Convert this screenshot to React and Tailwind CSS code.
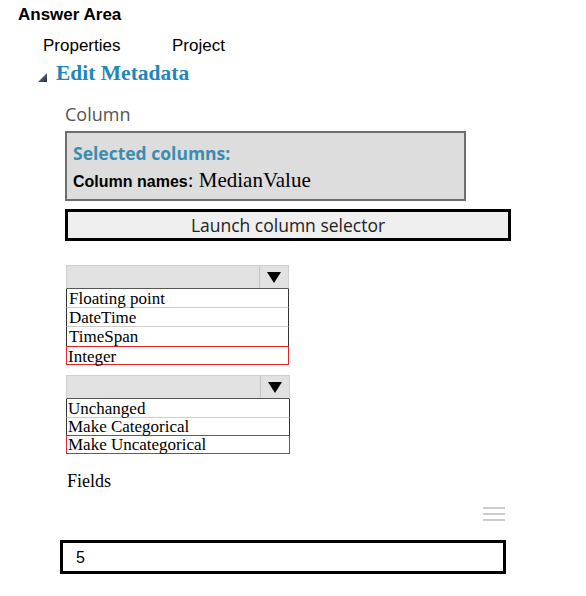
export default function App() {
  const serif = "font-['Liberation_Serif','Times_New_Roman',serif]";
  const sans = "font-['Liberation_Sans',Arial,sans-serif]";
  const segoe = "font-['Open_Sans','Noto_Sans',sans-serif]";
  return (
    <div className="w-[586px] h-[596px] bg-white overflow-hidden text-black">
      <div className={`pt-[5px] pl-[18px] text-[17px] leading-[20px] font-bold ${sans}`}>Answer Area</div>
      <div className={`mt-[11px] flex h-[20px] text-[17px] leading-[20px] ${sans}`}>
        <span className="ml-[43px] w-[129px]">Properties</span>
        <span>Project</span>
      </div>
      <div className="mt-[5px] flex items-start h-[24px]">
        <svg className="ml-[38px] mt-[12px]" width="9" height="9" viewBox="0 0 9 9">
          <defs>
            <linearGradient id="tg" x1="0" y1="0" x2="1" y2="1">
              <stop offset="0" stopColor="#7b8794" />
              <stop offset="1" stopColor="#1f2d3d" />
            </linearGradient>
          </defs>
          <polygon points="9,0 9,9 0,9" fill="url(#tg)" />
        </svg>
        <span className={`ml-[9px] text-[21.5px] leading-[24px] font-bold text-[#2386b6] ${serif}`}>Edit Metadata</span>
      </div>
      <div className={`mt-[17px] ml-[65px] text-[18px] leading-[24px] text-[#555555] ${segoe}`}>Column</div>
      <div className="mt-[5px] ml-[65px] w-[401px] h-[70px] border-2 border-[#6e6e6e] bg-[#dddddd] pl-[6px]">
        <div className={`pt-[9px] text-[17.5px] leading-[22px] font-bold text-[#3b8db0] ${segoe}`}>Selected columns:</div>
        <div className={`mt-[4px] text-[16px] leading-[24px] whitespace-nowrap ${sans}`}>
          <span className="font-bold">Column names</span>
          <span className={`text-[21px] ${serif}`}>: MedianValue</span>
        </div>
      </div>
      <div className={`mt-[8px] ml-[65px] w-[446px] h-[32px] border-[3px] border-black bg-[#efefef] flex items-center justify-center text-[17.5px] text-[#222222] ${segoe}`}>
        Launch column selector
      </div>

      <div className={`mt-[24px] ml-[66px] w-[223px] text-[17px] leading-[19px] ${serif}`}>
        <div className="h-[24px] flex bg-[#e1e1e1] border-x border-t border-[#cfcfcf] border-b border-b-[#555555]">
          <div className="flex-1" />
          <div className="w-[29px] border-l border-[#c4c4c4] flex items-center justify-center">
            <svg width="14" height="11" viewBox="0 0 14 11"><polygon points="0,0 14,0 7,11" fill="#000" /></svg>
          </div>
        </div>
        <div className="h-[19px] border-x border-[#333333] border-b border-b-[#cccccc] pl-[2px]">Floating point</div>
        <div className="h-[19px] border-x border-[#333333] border-b border-b-[#cccccc] pl-[2px]">DateTime</div>
        <div className="h-[19px] border-x border-[#333333] pl-[2px]">TimeSpan</div>
        <div className="h-[19px] border border-[#e0262b] pl-[1px]">Integer</div>
      </div>

      <div className={`mt-[10px] ml-[66px] w-[224px] text-[17px] leading-[19px] ${serif}`}>
        <div className="h-[24px] flex bg-[#e1e1e1] border-x border-t border-[#cfcfcf] border-b border-b-[#555555]">
          <div className="flex-1" />
          <div className="w-[29px] border-l border-[#c4c4c4] flex items-center justify-center">
            <svg width="14" height="11" viewBox="0 0 14 11"><polygon points="0,0 14,0 7,11" fill="#000" /></svg>
          </div>
        </div>
        <div className="h-[19px] border-x border-[#333333] border-b border-b-[#cccccc] pl-[1px]">Unchanged</div>
        <div className="h-[17px] border-x border-[#333333] pl-[1px] leading-[17px]">Make Categorical</div>
        <div className="h-[19px] border border-[#e0262b] pl-[1px] leading-[17px]">Make Uncategorical</div>
      </div>

      <div className={`mt-[17px] ml-[67px] text-[18px] leading-[20px] ${serif}`}>Fields</div>
      <svg className="mt-[15px] ml-[483px]" width="22" height="16" viewBox="0 0 22 16">
        <rect x="0" y="1" width="22" height="2" fill="#cccccc" />
        <rect x="0" y="7" width="22" height="2" fill="#cccccc" />
        <rect x="0" y="13" width="22" height="2" fill="#cccccc" />
      </svg>
      <div className={`mt-[18px] ml-[60px] w-[446px] h-[34px] border-[3px] border-black flex items-center pl-[13px] pt-[2px] text-[16px] ${sans}`}>5</div>
    </div>
  );
}
